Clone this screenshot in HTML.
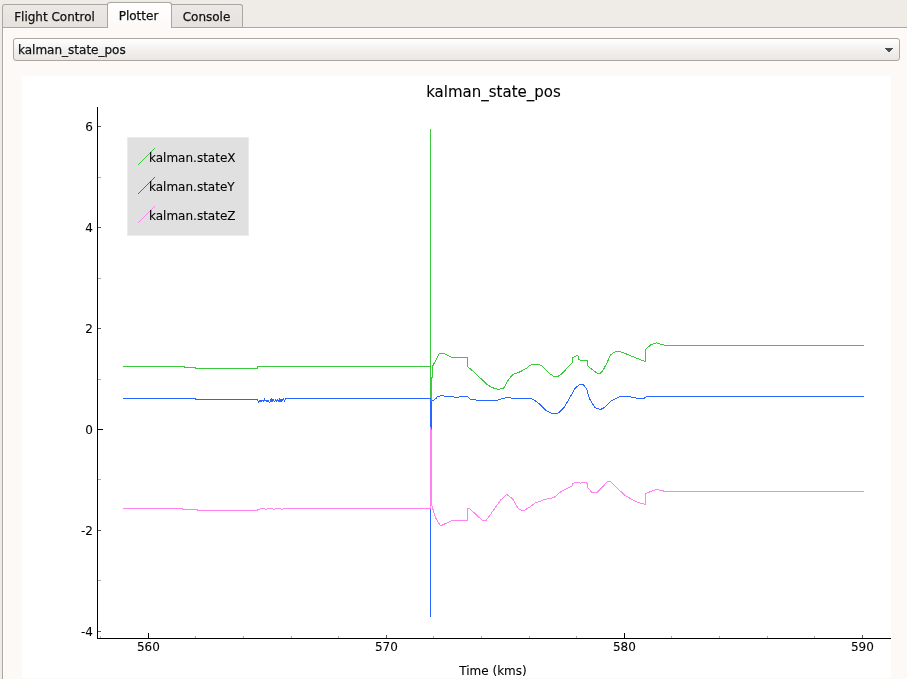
<!DOCTYPE html>
<html><head><meta charset="utf-8"><title>Plotter</title>
<style>
html,body{margin:0;padding:0;overflow:hidden}
body{width:907px;height:679px;overflow:hidden;background:#efebe7;position:relative;font-family:"DejaVu Sans","Liberation Sans",sans-serif;font-size:12px;color:#111;-webkit-text-stroke:0.25px #111}
.abs{position:absolute}
.gs{will-change:transform;display:block}
.pane{left:2px;top:27px;width:905px;height:652px;background:#fcf9f6;border:1px solid #aaa6a1;border-right:none;border-bottom:none;box-sizing:border-box}
.hl{background:#fff}
.tab{box-sizing:border-box;border:1px solid #aaa6a1;border-bottom:none;border-radius:3px 3px 0 0;text-align:center;white-space:nowrap}
.tab.off{top:4px;height:23px;background:linear-gradient(#ebe8e5,#e6e2de);line-height:24px}
.tab.on{top:2px;height:26px;background:linear-gradient(#ffffff,#fcf9f6);line-height:26px;z-index:2}
.combo{left:13px;top:38px;width:887px;height:23px;box-sizing:border-box;border:1px solid #aaa6a1;border-radius:3px;background:linear-gradient(#ffffff,#f3f1ef 50%,#e9e6e3);line-height:21px;padding-left:4px;padding-top:1px}
.plot{left:22px;top:76px;width:869px;height:602px;background:#fff}
svg text{font-family:"DejaVu Sans","Liberation Sans",sans-serif;font-size:12px;fill:#000;stroke:#000;stroke-width:0.1px}
svg polyline{fill:none;stroke-width:1;stroke-linejoin:round}
</style></head><body>
<div class="abs pane"></div>
<div class="abs hl" style="left:3px;top:28px;width:104px;height:1px"></div><div class="abs hl" style="left:172px;top:28px;width:735px;height:1px"></div><div class="abs hl" style="left:3px;top:28px;width:1px;height:651px"></div>
<div class="abs tab off" style="left:2px;width:106px;padding-right:1px;border-radius:3px 0 0 0"><span class="gs">Flight Control</span></div>
<div class="abs tab on" style="left:107px;width:65px;padding-right:2px"><span class="gs">Plotter</span></div>
<div class="abs tab off" style="left:171px;width:72px;padding-right:1px;border-radius:0 3px 0 0"><span class="gs">Console</span></div>
<div class="abs combo"><span class="gs">kalman_state_pos</span></div>
<div class="abs" style="left:885px;top:48px;width:8px;height:1px;background:#4d4d4d"></div><div class="abs" style="left:886px;top:49px;width:6px;height:1px;background:#4d4d4d"></div><div class="abs" style="left:887px;top:50px;width:4px;height:1px;background:#4d4d4d"></div><div class="abs" style="left:888px;top:51px;width:2px;height:1px;background:#4d4d4d"></div>
<div class="abs plot"></div>
<svg class="abs gs" style="left:0;top:0" width="907" height="679" viewBox="0 0 907 679">
<text x="493.5" y="96.5" text-anchor="middle" style="font-size:15px">kalman_state_pos</text>
<g shape-rendering="crispEdges">
<rect x="97" y="107" width="1" height="532" fill="#000"/>
<rect x="97" y="638" width="794" height="1" fill="#000"/>
<rect x="98" y="631" width="3" height="1" fill="#5a5a5a"/>
<rect x="98" y="580" width="3" height="1" fill="#aaa"/>
<rect x="98" y="530" width="3" height="1" fill="#5a5a5a"/>
<rect x="98" y="479" width="3" height="1" fill="#aaa"/>
<rect x="98" y="429" width="5" height="1" fill="#000"/>
<rect x="98" y="379" width="3" height="1" fill="#aaa"/>
<rect x="98" y="328" width="3" height="1" fill="#5a5a5a"/>
<rect x="98" y="278" width="3" height="1" fill="#aaa"/>
<rect x="98" y="227" width="3" height="1" fill="#5a5a5a"/>
<rect x="98" y="177" width="3" height="1" fill="#aaa"/>
<rect x="98" y="126" width="3" height="1" fill="#5a5a5a"/>
<rect x="100" y="636" width="1" height="2" fill="#aaa"/>
<rect x="148" y="633" width="1" height="5" fill="#000"/>
<rect x="195" y="636" width="1" height="2" fill="#aaa"/>
<rect x="243" y="636" width="1" height="2" fill="#aaa"/>
<rect x="291" y="636" width="1" height="2" fill="#aaa"/>
<rect x="338" y="636" width="1" height="2" fill="#aaa"/>
<rect x="386" y="635" width="1" height="3" fill="#5a5a5a"/>
<rect x="433" y="636" width="1" height="2" fill="#aaa"/>
<rect x="481" y="636" width="1" height="2" fill="#aaa"/>
<rect x="529" y="636" width="1" height="2" fill="#aaa"/>
<rect x="576" y="636" width="1" height="2" fill="#aaa"/>
<rect x="624" y="633" width="1" height="5" fill="#000"/>
<rect x="671" y="636" width="1" height="2" fill="#aaa"/>
<rect x="719" y="636" width="1" height="2" fill="#aaa"/>
<rect x="767" y="636" width="1" height="2" fill="#aaa"/>
<rect x="814" y="636" width="1" height="2" fill="#aaa"/>
<rect x="862" y="635" width="1" height="3" fill="#5a5a5a"/>
</g>
<g>
<text x="93" y="636" text-anchor="end">-4</text>
<text x="93" y="535" text-anchor="end">-2</text>
<text x="93" y="434" text-anchor="end">0</text>
<text x="93" y="333" text-anchor="end">2</text>
<text x="93" y="232" text-anchor="end">4</text>
<text x="93" y="131" text-anchor="end">6</text>
<text x="148.4" y="650.5" text-anchor="middle">560</text>
<text x="386.4" y="650.5" text-anchor="middle">570</text>
<text x="624.4" y="650.5" text-anchor="middle">580</text>
<text x="862.4" y="650.5" text-anchor="middle">590</text>
<text x="493" y="674.5" text-anchor="middle">Time (kms)</text>
</g>
<g shape-rendering="crispEdges">
<polyline points="123,366.5 184,366.5 185,367.5 195,367.5 196,368.5 257,368.5 257,366.5 430.5,366.5" stroke="#3cc83c"/>
<polyline points="432.5,377.5 432.5,366.5 439.2,353.6 443.9,353.6 451.8,357.4 467.5,357.4 467.5,366.5 474.4,372.4 487.7,385 492.3,387.7 498.2,389.3 502.9,388.4 504.9,386.4 507.5,381 512.8,374.4 518.8,372.4 526.1,368.5 530,365.3 532.7,364.5 539.3,364.5 542.6,366.5 549.9,373.8 553.9,376.4 557.9,376.4 561.8,373.8 572.4,362.5 572.7,357.9 577.7,355.2 578.8,359.2 580.4,360.5 587.3,360.5 587.8,365.8 589.7,367.8 597.6,373.4 600.3,373.1 602.9,370.5 606.9,363.2 610.2,355.2 614.9,351.9 618.9,351.2 622.8,352.5 644.1,361.2 645.4,361.2 645.6,349.2 651.2,344.5 656.5,342.9 665.7,345.5 863.5,345.5" stroke="#3cc83c"/>
<rect x="430" y="129" width="1" height="270" fill="#3cc83c"/><rect x="431" y="378" width="1" height="23" fill="#3cc83c"/><rect x="431" y="377" width="2" height="1" fill="#3cc83c"/><rect x="431" y="429" width="1" height="1" fill="#3cc83c"/>
<polyline points="123,398.5 195,398.5 196,399.5 257.5,399.5 258.5,402.5 259.5,400.5 260,401.5 261,400 261.5,401.5 262.5,400.5 263.5,401 264.5,398.5 265,401 266,400.5 267,401.5 268,400.5 269,402 270,402 270.5,399.5 271.5,401.5 272,398.5 272.5,401.5 273.5,400 274.5,401.5 275.5,400 276.5,401.5 277.5,399.5 278.5,401.5 279.5,399 280,401.5 281,399 281.5,401.5 282.5,399.5 283.5,399 284.5,401.5 285.5,398.5 430.5,398.5" stroke="#2864ff"/>
<polyline points="432,400.5 433.5,400.5 434.5,399.5 436,398.5 437.5,396.5 439.5,396.5 440.5,395.5 443.5,395.5 444.5,396.5 453,396.5 455,397.3 459,397 467,396.3 470.4,399.2 478.4,400.3 497,400.3 502.2,398.6 507.5,397.6 518,399 531.5,398.5 533,399.5 535,400.5 539,403.5 543,407.5 546.2,410.5 549.8,412.5 551.5,413.5 557.7,413.5 560,411.5 564,407.7 569.8,397.6 575.1,388.4 579.7,384.3 583,384.5 586.4,388.4 589.7,399 595,407.6 600.3,409.6 604.3,407.6 610.9,401 620.2,396.5 628.1,396.5 637.4,398.3 644,398.3 646.7,396.5 863.5,396.5" stroke="#2864ff"/>
<rect x="430" y="399" width="1" height="28" fill="#2864ff"/><rect x="431" y="401" width="1" height="28" fill="#2864ff"/><rect x="430" y="509" width="1" height="108" fill="#2864ff"/>
<polyline points="123,508.5 182,508.5 183,509.5 197,509.5 198,510.5 257,510.5 258,509.3 262,508.6 266,509.2 270,508.6 274,509.2 278,508.6 282,509.2 285,508.7 430.5,508.7" stroke="#ff82f0"/>
<polyline points="432,506.4 435.9,518.4 440.6,525.9 451.8,520.6 467.5,520.6 467.5,508.4 469.3,508.4 482.3,520.3 486.3,520.3 500.9,499.8 506.9,494.5 512.8,499.1 518.1,508.4 521.5,510.4 524.1,510.4 530,506.8 535.3,503 544.6,499.5 553.9,497.7 559.8,492.4 565.8,489.1 572.2,486.1 572.7,483.2 577.7,482.2 580.4,483.2 584.4,482.2 587,483.2 587.8,487.8 591.7,492.2 597,492.4 601.6,487.8 607.6,481.6 610.9,481.6 617.5,488.5 625.5,495.8 636.1,501.7 644,504.1 645.4,504.1 645.6,493.7 651.2,491.3 656.5,489.4 665.7,491.5 863.5,491.5" stroke="#ff82f0"/>
<rect x="430" y="427" width="1" height="82" fill="#ff82f0"/><rect x="431" y="430" width="1" height="76" fill="#ff82f0"/>
</g>
<rect x="127.5" y="137.5" width="121" height="98" fill="#e0e0e0" stroke="#ebebeb"/>
<line x1="138" y1="165" x2="155" y2="148" stroke="#3cc83c"/>
<line x1="138" y1="194" x2="155" y2="177" stroke="#2864ff"/>
<line x1="138" y1="223" x2="155" y2="206" stroke="#ff82f0"/>
<text x="149" y="162">kalman.stateX</text>
<text x="149" y="191">kalman.stateY</text>
<text x="149" y="220">kalman.stateZ</text>
</svg>
</body></html>
